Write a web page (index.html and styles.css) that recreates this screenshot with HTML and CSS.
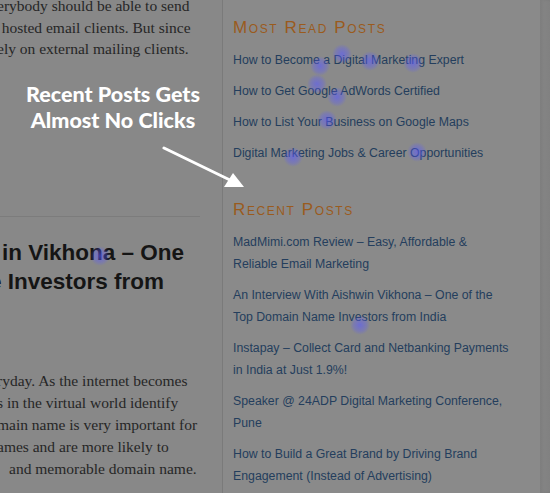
FILE: index.html
```html
<!DOCTYPE html>
<html lang="en">
<head>
<meta charset="utf-8">
<title>Heatmap – Recent Posts</title>
<link rel="stylesheet" href="styles.css">
</head>
<body>
<div class="page">
  <main class="content">
    <div class="intro">
      <div class="line">erybody should be able to send</div>
      <div class="line cut">y hosted email clients. But since</div>
      <div class="line">ely on external mailing clients.</div>
    </div>
    <hr class="divider">
    <h2 class="post-title">
      <span class="tline first">in Vikhona – One</span>
      <span class="tline second">e Investors from</span>
    </h2>
    <div class="excerpt">
      <div class="line">ryday. As the internet becomes</div>
      <div class="line">s in the virtual world identify</div>
      <div class="line">main name is very important for</div>
      <div class="line">ames and are more likely to</div>
      <div class="line indent">and memorable domain name.</div>
    </div>
  </main>
  <aside class="sidebar">
    <h3 class="widget-title">Most Read Posts</h3>
    <ul class="links">
      <li><a href="#">How to Become a Digital Marketing Expert</a></li>
      <li><a href="#">How to Get Google AdWords Certified</a></li>
      <li><a href="#">How to List Your Business on Google Maps</a></li>
      <li><a href="#">Digital Marketing Jobs &amp; Career Opportunities</a></li>
    </ul>
    <h3 class="widget-title recent">Recent Posts</h3>
    <ul class="links">
      <li><a href="#">MadMimi.com Review – Easy, Affordable &amp; Reliable Email Marketing</a></li>
      <li><a href="#">An Interview With Aishwin Vikhona – One of the Top Domain Name Investors from India</a></li>
      <li><a href="#">Instapay – Collect Card and Netbanking Payments in India at Just 1.9%!</a></li>
      <li><a href="#">Speaker @ 24ADP Digital Marketing Conference, Pune</a></li>
      <li><a href="#">How to Build a Great Brand by Driving Brand Engagement (Instead of Advertising)</a></li>
    </ul>
  </aside>
  <div class="edge"></div>

  <div class="annotation">
    <p class="note">Recent Posts Gets<br>Almost No Clicks</p>
    <svg class="arrow" width="90" height="50" viewBox="0 0 90 50">
      <line x1="2" y1="2" x2="70" y2="35" stroke="#fff" stroke-width="3" stroke-linecap="round"/>
      <polygon points="82,41 62,41 71,27" fill="#fff"/>
    </svg>
  </div>

  <span class="heat h1"></span>
  <span class="heat h2"></span>
  <span class="heat h3"></span>
  <span class="heat h4"></span>
  <span class="heat h5"></span>
  <span class="heat h6"></span>
  <span class="heat h7"></span>
  <span class="heat h8"></span>
  <span class="heat h9"></span>
  <span class="heat h10"></span>
  <span class="heat h11"></span>
</div>
</body>
</html>
```
FILE: styles.css
```css
html, body {
  margin: 0;
  padding: 0;
  background: #888888;
  overflow: hidden;
}
.page {
  position: relative;
  display: flex;
  width: 550px;
  height: 493px;
  overflow: hidden;
}
.content {
  width: 222px;
  flex: none;
  overflow: hidden;
  background: #888888;
  font-family: "Liberation Serif", "Times New Roman", serif;
  color: #262626;
}
.intro {
  margin-top: -5px;
  font-size: 15.5px;
  line-height: 21.5px;
}
.line {
  white-space: nowrap;
  margin-left: -3px;
}
.line.cut {
  margin-left: -10px;
}
.line.indent {
  margin-left: 9px;
}
.divider {
  margin: 156px 0 0 0;
  width: 200px;
  border: 0;
  border-top: 1px solid #7c7c7c;
  height: 0;
}
.post-title {
  margin: 21px 0 0 0;
  font-family: "Liberation Sans", Arial, sans-serif;
  font-weight: 700;
  font-size: 22.5px;
  line-height: 29px;
  color: #151515;
}
.tline {
  display: block;
  white-space: nowrap;
}
.tline.first {
  margin-left: 2px;
}
.tline.second {
  margin-left: -11px;
}
.excerpt {
  margin-top: 74px;
  font-size: 15.5px;
  line-height: 22px;
}
.sidebar {
  width: 307px;
  flex: none;
  border-left: 1px solid #7a7a7a;
  padding-left: 10px;
  background: #8a8a8a;
  font-family: "Liberation Sans", Arial, sans-serif;
}
.widget-title {
  margin: 17px 0 0 0;
  font-size: 17px;
  font-weight: 400;
  font-variant: small-caps;
  letter-spacing: 1.6px;
  line-height: 22px;
  color: #9a5b1d;
}
.widget-title.recent {
  margin-top: 35px;
}
.links {
  list-style: none;
  margin: 10px 0 0 0;
  padding: 0;
}
.links li {
  font-size: 12.3px;
  line-height: 22px;
  margin-bottom: 9px;
  padding-right: 31px;
}
.links a {
  color: #243e5d;
  text-decoration: none;
}
.edge {
  flex: 1;
  background: linear-gradient(to right, #858585, #818181);
  box-shadow: inset 2px 0 3px rgba(0,0,0,0.05);
}
.annotation {
  position: absolute;
  left: 0;
  top: 80px;
  width: 250px;
  height: 120px;
}
.note {
  margin: 0;
  padding-top: 1px;
  width: 226px;
  text-align: center;
  font-family: Lato, "Open Sans", sans-serif;
  font-weight: 900;
  font-size: 21.5px;
  line-height: 26px;
  color: #ffffff;
}
.arrow {
  position: absolute;
  left: 162px;
  top: 66px;
}
.heat {
  position: absolute;
  width: 20px;
  height: 20px;
  margin: -10px 0 0 -10px;
  border-radius: 50%;
  background: radial-gradient(circle, rgba(90,90,255,0.6) 0%, rgba(90,90,255,0.3) 45%, rgba(90,90,255,0) 70%);
}
.h1 { left: 320px; top: 66px; }
.h2 { left: 342px; top: 54px; }
.h3 { left: 370px; top: 61px; }
.h4 { left: 413px; top: 63px; }
.h5 { left: 317px; top: 84px; }
.h6 { left: 337px; top: 97px; }
.h7 { left: 327px; top: 120px; }
.h8 { left: 293px; top: 157px; }
.h9 { left: 417px; top: 152px; }
.h10 { left: 360px; top: 325px; }
.h11 { left: 100px; top: 256px; }
```
